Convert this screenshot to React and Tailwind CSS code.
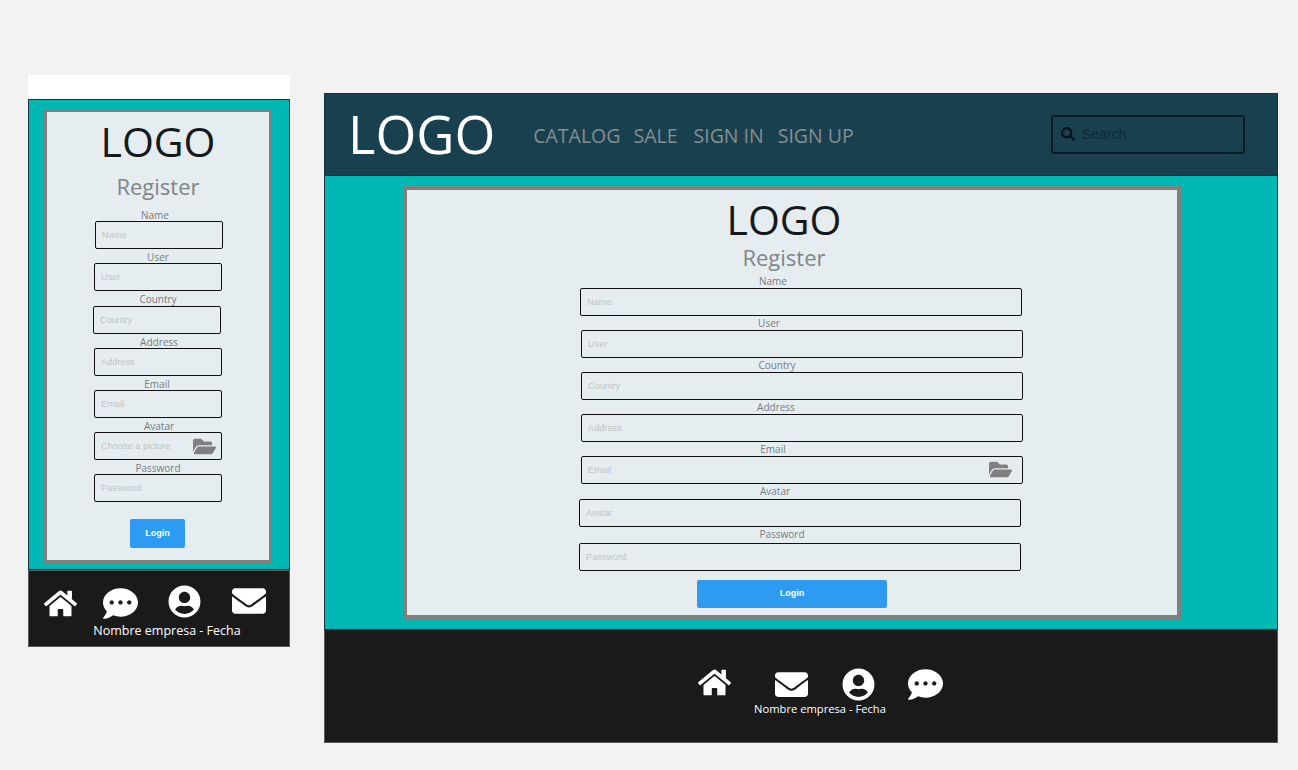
import React from "react";
import { FaCommentDots, FaEnvelope, FaFolderOpen, FaHome, FaSearch, FaUserCircle } from "react-icons/fa";

const mobileFields = [
  { label: "Name", rowClass: "ml-[48px]", labelClass: "h-[14px] pt-[1px] pr-[8px]" },
  { label: "User", rowClass: "ml-[47px]", labelClass: "h-[14px] pt-[1px]" },
  { label: "Country", rowClass: "ml-[46px]", labelClass: "h-[15px] pt-[1px] pl-[2px]" },
  { label: "Address", rowClass: "ml-[47px]", labelClass: "h-[14px] pt-[1px] pl-[2px]" },
  { label: "Email", rowClass: "ml-[47px]", labelClass: "h-[14px] pt-[1px] pr-[2px]" },
  { label: "Avatar", placeholder: "Choose a picture", folder: "right-[6px] top-[3px]", rowClass: "ml-[47px]", labelClass: "h-[14px] pt-[1px] pl-[2px]" },
  { label: "Password", rowClass: "ml-[47px]", labelClass: "h-[14px] pt-[1px]" },
];

const desktopFields = [
  { label: "Name", rowClass: "ml-[173px]", labelClass: "h-[14px] pr-[56px]" },
  { label: "User", rowClass: "ml-[174px]", labelClass: "h-[14px] pr-[66px]" },
  { label: "Country", rowClass: "ml-[174px]", labelClass: "h-[14px] pr-[50px]" },
  { label: "Address", rowClass: "ml-[174px]", labelClass: "h-[14px] pr-[52px]" },
  { label: "Email", folder: "right-[11px] top-[2px]", rowClass: "ml-[174px]", labelClass: "h-[14px] pr-[58px]" },
  { label: "Avatar", rowClass: "ml-[172px]", labelClass: "h-[15px] pr-[50px]" },
  { label: "Password", rowClass: "ml-[172px]", labelClass: "h-[16px] pr-[36px]" },
];

const Field = ({ field, widthClass }) => (
  <div className={`${field.rowClass} ${widthClass}`}>
    <div className={`${field.labelClass} text-center text-[10px] leading-[14px] text-[#757c7f]`}>{field.label}</div>
    <div className="relative h-[28px]">
      <input
        placeholder={field.placeholder || field.label}
        className="block h-full w-full rounded-[2px] border border-[#111] bg-transparent pl-[6px] font-['Liberation_Sans',sans-serif] text-[9.2px] outline-none placeholder:text-[#c0c5c7]"
      />
      {field.folder && <FaFolderOpen className={`${field.folder} absolute text-[23px] text-[#808080]`} />}
    </div>
  </div>
);

const LoginButton = ({ className }) => (
  <button className={`${className} block rounded-[2px] bg-[#2e9bf2] font-['Liberation_Sans',sans-serif] text-[9px] font-bold text-white`}>
    Login
  </button>
);

const App = () => (
  <div className="relative h-[770px] overflow-hidden bg-[#f2f2f2] font-['Open_Sans',sans-serif]">
    {/* mobile window */}
    <div className="absolute left-[28px] top-[75px] w-[262px]">
      <div className="h-[24px] bg-white" />
      <div className="h-[471px] border border-[#12323d] bg-[#00b8b3] px-[15px] py-[9px]">
        <div className="h-[454px] w-[228px] border-[3.5px] border-[#808080] bg-[#e6edf0]">
          <div className="mt-[1px] text-center text-[41px] leading-[56px] text-[#15191c]">LOGO</div>
          <div className="mt-[2px] text-center text-[22px] leading-[30px] text-[#7f8588]">Register</div>
          <div className="mt-[6px]">
            {mobileFields.map((f) => (
              <Field key={f.label} field={f} widthClass="w-[128px]" />
            ))}
          </div>
          <LoginButton className="ml-[83px] mt-[17px] h-[29px] w-[55px]" />
        </div>
      </div>
      <div className="h-[77px] border border-[#5a5a5a] bg-[#1a1a1a] text-white">
        <div className="flex h-[51px] items-start pl-[15px]">
          <FaHome className="mt-[16px] text-[33px]" />
          <FaCommentDots className="ml-[26px] mt-[15px] text-[35px]" />
          <FaUserCircle className="ml-[30px] mt-[14px] text-[33px]" />
          <FaEnvelope className="ml-[31px] mt-[13px] text-[34px]" />
        </div>
        <div className="pl-[16px] text-center text-[12.5px] leading-[18px]">Nombre empresa - Fecha</div>
      </div>
    </div>

    {/* desktop window */}
    <div className="absolute left-[324px] top-[93px] w-[954px]">
      <div className="flex h-[83px] items-center border border-[#12323d] bg-[#19404f] pl-[23px]">
        <span className="mb-[2px] text-[52.5px] leading-[72px] text-white">LOGO</span>
        <nav className="ml-[38px] mt-[2px] flex text-[19.5px] leading-[28px] text-[#868e91]">
          <span>CATALOG</span>
          <span className="ml-[13px]">SALE</span>
          <span className="ml-[16px]">SIGN IN</span>
          <span className="ml-[14px]">SIGN UP</span>
        </nav>
        <div className="mb-[1px] ml-auto mr-[32px] flex h-[39px] w-[194px] items-center rounded-[3px] border-2 border-[#0b1a22] pl-[8px]">
          <FaSearch className="text-[14px] text-[#08141a]" />
          <span className="ml-[7px] font-['Liberation_Sans',sans-serif] text-[14px] text-[#0f2b36]">Search</span>
        </div>
      </div>
      <div className="h-[454px] border-x border-b border-[#12323d] bg-[#00b8b3] pl-[78px] pt-[10px]">
        <div className="h-[433px] w-[778px] border-[4px] border-[#808080] bg-[#e6edf0]">
          <div className="pr-[16px] pt-[3px] text-center text-[41px] leading-[52px] text-[#15191c]">LOGO</div>
          <div className="mb-[5px] pr-[16px] text-center text-[22px] leading-[24px] text-[#7f8588]">Register</div>
          {desktopFields.map((f) => (
            <Field key={f.label} field={f} widthClass="w-[442px]" />
          ))}
          <LoginButton className="ml-[290px] mt-[9px] h-[28px] w-[190px]" />
        </div>
      </div>
      <div className="h-[113px] border-x border-b border-[#5a5a5a] bg-[#1a1a1a] text-white">
        <div className="flex h-[71px] items-start pl-[373px]">
          <FaHome className="mt-[36px] text-[33px]" />
          <FaEnvelope className="ml-[44px] mt-[38px] text-[33px]" />
          <FaUserCircle className="ml-[34px] mt-[38px] text-[33px]" />
          <FaCommentDots className="ml-[33px] mt-[37px] text-[35px]" />
        </div>
        <div className="pl-[38px] text-center text-[11.2px] leading-[16px]">Nombre empresa - Fecha</div>
      </div>
    </div>
  </div>
);

export default App;
